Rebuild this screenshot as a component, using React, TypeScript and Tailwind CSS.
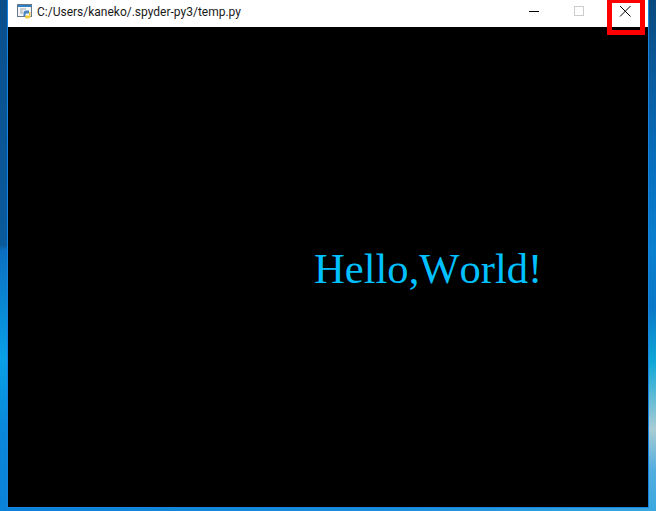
const TitleIcon = () => (
  <svg width="16" height="16" viewBox="0 0 16 16" className="shrink-0">
    <rect x="0.5" y="0.5" width="14" height="12" fill="#f4f6f8" stroke="#66788a" />
    <rect x="1" y="1" width="13" height="2" fill="#2f7fc4" />
    <path d="M3 5h6M3 7h3M3 9h3" stroke="#9aa6b0" />
    <path d="M6.500 9.500c0-2 1-3 2.500-3h3v3H9.500c-.8 0-1 .5-1 1.500v1h-2z" fill="#4b87bd" />
    <path d="M13.500 8v3.500c0 2-1 3-2.500 3H9c-.8 0-1-.5-1-1.200 0-1.300 1-1.800 2-1.800h2V8z" fill="#f6cf3e" />
  </svg>
);

export default function App() {
  return (
    <div className="flex h-[511px] w-[656px] relative overflow-hidden bg-[linear-gradient(to_right,#0a82d8,#1a8fdc_60%,#3aa8e0)] pb-[3px]">
      <div className="h-[511px] w-[7px] shrink-0 bg-[linear-gradient(to_bottom,#0a4f8c_0%,#0a5a9c_48%,#0b6fc0_49%,#08a0e6_70%,#0a86da_85%,#0a82d8_100%)]" />
      <div className="flex min-w-0 flex-1 flex-col border-x border-b border-[#1683e0]">
        <div className="flex h-[27px] shrink-0 items-center bg-white pl-[9px] text-[#1a1a1a]">
          <div className="mb-[3px] flex items-center">
            <TitleIcon />
            <span className="ml-[4px] font-['Roboto',sans-serif] text-[12px] leading-none">C:/Users/kaneko/.spyder-py3/temp.py</span>
          </div>
          <div className="ml-auto flex h-full items-center">
            <svg width="46" height="27" viewBox="0 0 46 27">
              <path d="M19 11.500h10" stroke="#000" strokeWidth="1" />
            </svg>
            <svg width="46" height="27" viewBox="0 0 46 27">
              <rect x="18.500" y="6.500" width="9" height="9" fill="none" stroke="#cccccc" />
            </svg>
            <svg width="46" height="27" viewBox="0 0 46 27">
              <path d="M18 6l10.500 10.500M28.500 6L18 16.500" stroke="#000" strokeWidth="1" />
            </svg>
          </div>
        </div>
        <div className="flex flex-1 items-start bg-black pl-[306px] pt-[216px]">
          <span className="font-['Liberation_Serif',serif] text-[42.6px] leading-[52px] whitespace-nowrap text-[#00c0ff] [font-kerning:none]">Hello,World!</span>
        </div>
      </div>
      <div className="h-[511px] w-[7px] shrink-0 bg-[linear-gradient(to_bottom,#0a4a80_0%,#0870c0_33%,#0a80d0_49%,#0a78c8_60%,#10a8d8_71%,#a8ccd4_84%,#52aedf_92%,#3aa8e0_100%)]" />
      <div className="absolute left-[607px] top-0 h-[35px] w-[38px] border-x-[5px] border-t-[3px] border-b-[5px] border-[#ff0000]" />
    </div>
  );
}
